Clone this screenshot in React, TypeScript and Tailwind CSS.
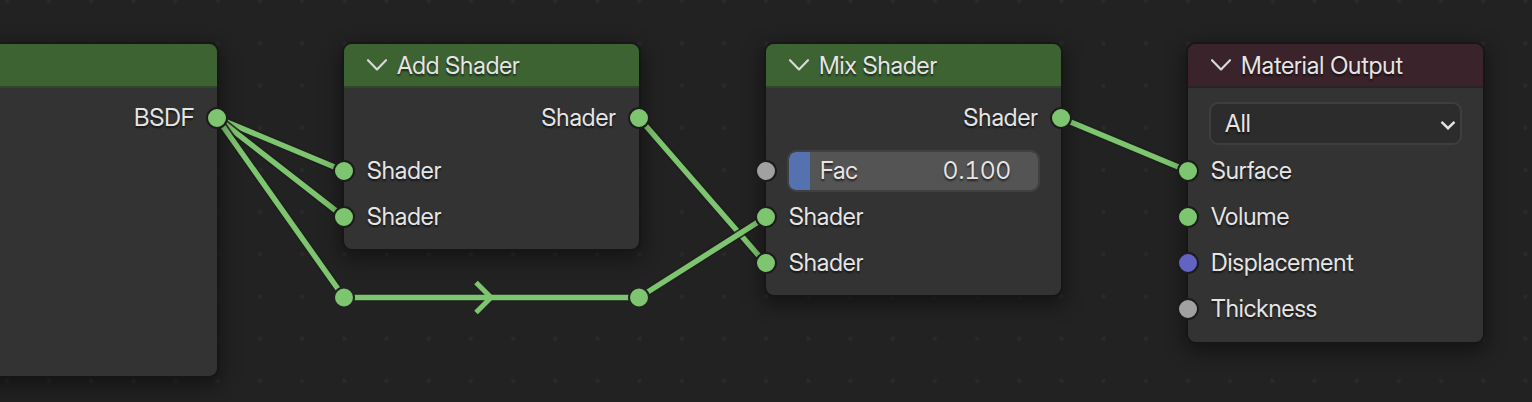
import { useState } from "react";
import type { ReactNode } from "react";

type Tone = "shader" | "value" | "vector";

const socketTones: Record<Tone, string> = {
  shader: "bg-[#7ec56f]",
  value: "bg-[#a1a1a1]",
  vector: "bg-[#6363c3]",
};

function Socket({ tone, side }: { tone: Tone; side: "left" | "right" }) {
  const place = side === "left" ? "-left-[11px]" : "-right-[11px]";
  return (
    <span
      className={`absolute top-3 size-[22px] rounded-full border-2 border-[#1c1c1c] ${place} ${socketTones[tone]}`}
    />
  );
}

function InputRow({ label, tone }: { label: string; tone: Tone }) {
  return (
    <li className="relative flex h-[46px] items-center px-[23px]">
      <Socket tone={tone} side="left" />
      {label}
    </li>
  );
}

function OutputRow({ label, tone }: { label: string; tone: Tone }) {
  return (
    <li className="relative flex h-[46px] items-center justify-end px-[23px]">
      {label}
      <Socket tone={tone} side="right" />
    </li>
  );
}

function FactorRow() {
  const [value, setValue] = useState(0.1);
  const fill = `calc(${value * 100}% - ${(1 - value) * 4}px)`;
  return (
    <li className="relative flex h-[46px] items-center px-[21px]">
      <Socket tone="value" side="left" />
      <div className="relative flex h-[42px] w-full">
        <input
          id="factor"
          type="range"
          min={0}
          max={1}
          step={0.001}
          value={value}
          onChange={(e) => setValue(Number(e.target.value))}
          className="size-full cursor-pointer appearance-none rounded-[9px] border-2 border-[#404040] bg-[#545454] bg-clip-padding bg-origin-padding [&::-webkit-slider-thumb]:invisible"
          style={{
            backgroundImage: `linear-gradient(to right, #5472b0 ${fill}, transparent ${fill})`,
          }}
        />
        <div className="pointer-events-none absolute inset-0 flex items-center justify-between pr-[29px] pl-[33px]">
          <label htmlFor="factor">Fac</label>
          <output htmlFor="factor" className="tabular-nums">
            {value.toFixed(3)}
          </output>
        </div>
      </div>
    </li>
  );
}

function TargetSelect() {
  return (
    <div className="relative mx-[21px] mt-[14px] mb-[3px]">
      <select
        aria-label="Target"
        defaultValue="All"
        className="block h-[43px] w-full appearance-none rounded-[9px] border-2 border-[#3e3e3e] bg-[#2c2c2c] px-[14px] text-[#e5e5e5] [text-shadow:inherit]"
      >
        <option>All</option>
        <option>Eevee</option>
        <option>Cycles</option>
      </select>
      <svg
        viewBox="0 0 16 10"
        className="pointer-events-none absolute top-[18px] right-[6px] h-[10px] w-4"
        fill="none"
        stroke="#e2e2e2"
        strokeWidth="2.500"
      >
        <path d="M1.500 1.800 8 8.200 14.500 1.800" />
      </svg>
    </div>
  );
}

interface NodeProps {
  title?: string;
  place: string;
  header: string;
  children: ReactNode;
}

function Node({ title, place, header, children }: NodeProps) {
  return (
    <section
      className={`absolute w-[295px] rounded-lg bg-[#333333] shadow-[0_0_0_2px_rgba(22,22,22,0.85),0_6px_20px_4px_rgba(0,0,0,0.42)] ${place}`}
    >
      <header
        className={`flex h-11 items-center gap-[10px] rounded-t-lg border-b-2 px-[23px] ${header}`}
      >
        {title && (
          <>
            <button type="button" aria-label={`Collapse ${title}`}>
              <svg
                viewBox="0 0 20 12"
                className="h-3 w-5"
                fill="none"
                stroke="#d8d8d8"
                strokeWidth="2.200"
                strokeLinecap="round"
                strokeLinejoin="round"
              >
                <path d="M1 1.200 10 10.400 19 1.200" />
              </svg>
            </button>
            <h2 className="pt-0.5">{title}</h2>
          </>
        )}
      </header>
      {children}
    </section>
  );
}

const green = "bg-[#3d6333] border-[#2f4629]";
const maroon = "bg-[#3a232a] border-[#2b2224]";

const links = [
  "M217 118 344 171",
  "M217 118 344 217",
  "M217 118 344 297.500",
  "M344 297.500H639",
  "M639 118 766 264",
  "M639 297.500 766 217",
  "M1061 118 1188 171",
];

const reroutes = [
  { x: 344, y: 297.5 },
  { x: 639, y: 297.5 },
];

function Links() {
  return (
    <svg className="absolute inset-0 size-full" fill="none">
      {links.map((d) => (
        <g key={d}>
          <path d={d} stroke="#1e1e1e" strokeOpacity="0.850" strokeWidth="9" />
          <path d={d} stroke="#7ec56f" strokeWidth="5.400" />
        </g>
      ))}
      <path d="M476 282.500 491 297.500 476 312.500" stroke="#7ec56f" strokeWidth="5" />
      {reroutes.map(({ x, y }) => (
        <circle key={x} cx={x} cy={y} r="10" fill="#7ec56f" stroke="#222222" strokeWidth="2" />
      ))}
    </svg>
  );
}

export default function App() {
  return (
    <main className="relative h-screen w-full overflow-hidden bg-[#222222] font-['Inter_Display',Inter,sans-serif] text-[24px] leading-[30px] text-[#e5e5e5] [text-shadow:0_2px_2px_rgba(0,0,0,0.6)]">
      <svg className="absolute inset-0 size-full">
        <defs>
          <pattern id="grid" x="28" y="22.500" width="42.180" height="42.180" patternUnits="userSpaceOnUse">
            <circle cx="21.100" cy="21.100" r="2.100" fill="#2a2a2a" />
          </pattern>
        </defs>
        <rect width="100%" height="100%" fill="url(#grid)" />
      </svg>
      <Links />

      <Node place="top-11 -left-[78px]" header={green}>
        <ul className="pt-[7px] pb-[235px]">
          <OutputRow label="BSDF" tone="shader" />
        </ul>
      </Node>

      <Node title="Add Shader" place="top-11 left-[344px]" header={green}>
        <ul className="pt-[7px]">
          <OutputRow label="Shader" tone="shader" />
        </ul>
        <ul className="pt-[7px] pb-[9px]">
          <InputRow label="Shader" tone="shader" />
          <InputRow label="Shader" tone="shader" />
        </ul>
      </Node>

      <Node title="Mix Shader" place="top-11 left-[766px]" header={green}>
        <ul className="pt-[7px]">
          <OutputRow label="Shader" tone="shader" />
        </ul>
        <ul className="pt-[7px] pb-[9px]">
          <FactorRow />
          <InputRow label="Shader" tone="shader" />
          <InputRow label="Shader" tone="shader" />
        </ul>
      </Node>

      <Node title="Material Output" place="top-11 left-[1188px]" header={maroon}>
        <TargetSelect />
        <ul className="pb-[10px]">
          <InputRow label="Surface" tone="shader" />
          <InputRow label="Volume" tone="shader" />
          <InputRow label="Displacement" tone="vector" />
          <InputRow label="Thickness" tone="value" />
        </ul>
      </Node>
    </main>
  );
}
